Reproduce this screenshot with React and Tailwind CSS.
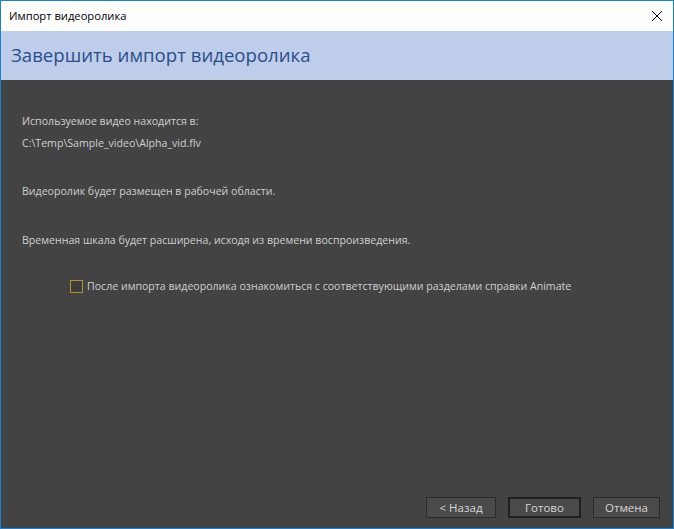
import React from 'react';

const Button = ({ children, primary = false, width }) => (
  <button
    type="button"
    className={`h-[21px] flex items-center justify-center text-[11.5px] text-[#d6d6d6] bg-[#4a4a4a] ${width} ${
      primary ? 'border-2 border-[#202020]' : 'border border-[#2a2a2a]'
    }`}
  >
    {children}
  </button>
);

export default function App() {
  return (
    <div
      className="w-[674px] h-[529px] flex flex-col border border-[#1c7fd6] bg-[#434343]"
      style={{ fontFamily: '"Open Sans", "DejaVu Sans", sans-serif' }}
    >
      {/* Title bar */}
      <div className="h-[30px] bg-white flex items-center justify-between pl-2 pr-[10px]">
        <span className="text-[11.2px] text-black">Импорт видеоролика</span>
        <svg width="12" height="12" viewBox="0 0 12 12" className="text-black">
          <path d="M1 1 L11 11 M11 1 L1 11" stroke="currentColor" strokeWidth="1" />
        </svg>
      </div>

      {/* Header */}
      <div className="h-[49px] bg-[#bdcdea] flex items-center pl-[10px]">
        <h1 className="text-[18.6px] text-[#2b4d8c] leading-none">Завершить импорт видеоролика</h1>
      </div>

      {/* Body */}
      <div className="flex-1 flex flex-col pl-[21px] pr-[13px] text-[10.6px] text-[#cfcfcf]">
        <div className="mt-[33px] leading-[16px]">Используемое видео находится в:</div>
        <div className="mt-[6px] leading-[16px]">C:\Temp\Sample_video\Alpha_vid.flv</div>
        <div className="mt-[32px] leading-[16px]">Видеоролик будет размещен в рабочей области.</div>
        <div className="mt-[33px] leading-[16px]">Временная шкала будет расширена, исходя из времени воспроизведения.</div>
        <label className="mt-[30px] ml-[48px] flex items-center gap-[4px] leading-[16px]">
          <span className="w-[13px] h-[13px] border border-[#b0952a] bg-[#3d3d3d]" />
          <span>После импорта видеоролика ознакомиться с соответствующими разделами справки Animate</span>
        </label>

        <div className="mt-auto mb-[10px] flex justify-end items-center gap-[12px]">
          <Button width="w-[70px]">&lt; Назад</Button>
          <Button primary width="w-[73px]">Готово</Button>
          <Button width="w-[67px]">Отмена</Button>
        </div>
      </div>
    </div>
  );
}
